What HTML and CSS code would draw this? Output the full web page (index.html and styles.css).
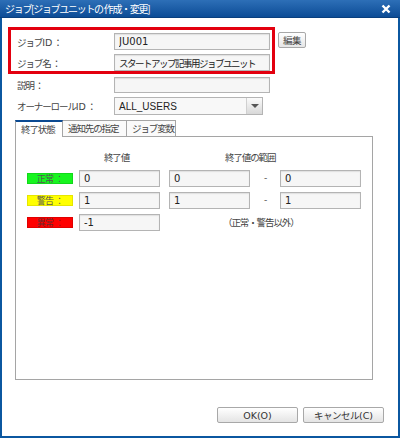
FILE: index.html
```html
<!DOCTYPE html>
<html lang="ja">

<head>
  <meta charset="UTF-8">
  <title>ジョブ[ジョブユニットの作成・変更]</title>
  <link rel="stylesheet" href="styles.css">
</head>

<body>
  <div class="dialog">
    <!-- Title bar -->
    <div class="titlebar">
      <span class="title">ジョブ[ジョブユニットの 作成・変更]</span>
      <svg class="close" width="10" height="10" viewBox="0 0 10 10">
        <path d="M1.5 1.5 L8.5 8.5 M8.5 1.5 L1.5 8.5" stroke="#fff" stroke-width="2.4" />
      </svg>
    </div>

    <div class="body">
      <!-- Job ID / name -->
      <div class="top-row">
        <div class="highlight">
          <div class="form-row">
            <label>ジョブ<span class="latin">ID</span> ：</label>
            <input class="field" type="text" value="JU001">
          </div>
          <div class="form-row">
            <label>ジョブ名 ：</label>
            <input class="field jp" type="text" value="スタートアップ記事用ジョブユニット">
          </div>
        </div>
        <button class="edit">編集</button>
      </div>

      <div class="plain-rows">
        <div class="form-row">
          <label>説明 ：</label>
          <input class="field" type="text" value="">
        </div>
        <div class="form-row select-row">
          <label>オーナーロール<span class="latin">ID</span> ：</label>
          <div class="select">
            <span>ALL_USERS</span>
            <span class="arrow"></span>
          </div>
        </div>
      </div>

      <!-- Tabs -->
      <div class="tabs">
        <div class="tab active">終了状態</div>
        <div class="tab">通知先の指定</div>
        <div class="tab">ジョブ変数</div>
      </div>
      <div class="panel">
        <div class="end-grid">
          <div></div>
          <div class="head head-value">終了値</div>
          <div class="head head-range">終了値の範囲</div>

          <div class="status ok">正常 ：</div>
          <input class="field small" type="text" value="0">
          <input class="field small" type="text" value="0">
          <div class="dash">-</div>
          <input class="field small" type="text" value="0">

          <div class="status warn">警告 ：</div>
          <input class="field small" type="text" value="1">
          <input class="field small" type="text" value="1">
          <div class="dash">-</div>
          <input class="field small" type="text" value="1">

          <div class="status error">異常 ：</div>
          <input class="field small" type="text" value="-1">
          <div class="note">（正常・警告以外）</div>
        </div>
      </div>

      <!-- Footer -->
      <div class="footer">
        <button class="btn"><span class="latin">OK(O)</span></button>
        <button class="btn">キャンセル<span class="latin">(C)</span></button>
      </div>
    </div>
  </div>
</body>

</html>
```

FILE: styles.css
```css
* {
  margin: 0;
  padding: 0;
  box-sizing: border-box;
}

html, body {
  width: 400px;
  height: 438px;
  overflow: hidden;
  font-family: "Noto Sans CJK JP", sans-serif;
  font-size: 9.5px;
  letter-spacing: -1.1px;
  color: #444;
  background: #fff;
  white-space: nowrap;
}

.latin {
  font-family: "DejaVu Sans", sans-serif;
  font-size: 9.5px;
  letter-spacing: 0;
}

.dialog {
  width: 400px;
  height: 438px;
  display: flex;
  flex-direction: column;
  border: 2px solid #0b57a0;
  border-top: none;
}

/* Title bar */
.titlebar {
  height: 18px;
  margin: 0 -2px;
  padding: 0 9px 0 5px;
  display: flex;
  align-items: center;
  justify-content: space-between;
  background: linear-gradient(#2d6fb7, #0c4c96);
  border-bottom: 1px solid #093f7e;
}

.title {
  color: #fff;
  font-size: 10px;
  letter-spacing: -1.3px;
}

.close {
  display: block;
}

.body {
  flex: 1;
  display: flex;
  flex-direction: column;
  padding: 9px 0 0 6px;
}

.top-row {
  display: flex;
  align-items: flex-start;
}

.highlight {
  width: 267px;
  border: 3px solid #e3000f;
  padding: 3px 2px 0 6px;
  display: flex;
  flex-direction: column;
  gap: 4px;
}

.form-row {
  display: flex;
  align-items: center;
  height: 17px;
}

.form-row label {
  width: 97px;
}

.field {
  width: 156px;
  height: 17px;
  border: 1px solid #b4b4b4;
  background: #f6f6f6;
  box-shadow: inset 0 1px 1px #e0e0e0;
  padding: 0 4px;
  font-family: "DejaVu Sans", sans-serif;
  font-size: 10px;
  letter-spacing: 0;
  color: #222;
  outline: none;
}

.field.jp {
  font-family: "Noto Sans CJK JP", sans-serif;
  font-size: 9.5px;
  letter-spacing: -1.5px;
}

.edit {
  margin: 5px 0 0 3px;
  width: 28px;
  height: 16px;
  border: 1px solid #a8a8a8;
  border-radius: 2px;
  background: linear-gradient(#ffffff, #e6e6e6);
  font-family: "Noto Sans CJK JP", sans-serif;
  font-size: 9.5px;
  letter-spacing: -0.5px;
  color: #444;
}

.plain-rows {
  padding-left: 9px;
  margin-top: 3px;
  display: flex;
  flex-direction: column;
  gap: 4px;
}

.plain-rows .form-row:first-child {
  height: 16px;
}

.plain-rows .form-row:first-child .field {
  height: 16px;
}

.select-row {
  height: 18px !important;
}

.select {
  width: 149px;
  height: 18px;
  border: 1px solid #b4b4b4;
  background: #f8f8f8;
  display: flex;
  align-items: center;
  justify-content: space-between;
  padding-left: 4px;
  font-family: "Liberation Sans", sans-serif;
  font-size: 10px;
  letter-spacing: 0;
  color: #222;
}

.arrow {
  width: 16px;
  height: 16px;
  border-left: 1px solid #d0d0d0;
  background: linear-gradient(#fbfbfb, #d8d8d8);
  position: relative;
}

.arrow::after {
  content: "";
  position: absolute;
  left: 4px;
  top: 6px;
  border-left: 4px solid transparent;
  border-right: 4px solid transparent;
  border-top: 4px solid #555;
}

/* Tabs */
.tabs {
  display: flex;
  margin: 5px 0 0 7px;
  height: 16px;
}

.tab {
  padding: 0 5px;
  height: 16px;
  border: 1px solid #a5a5a5;
  border-bottom: none;
  border-left: none;
  background: #fafafa;
  line-height: 15px;
}

.tab.active {
  width: 48px;
  border-left: 1px solid #a5a5a5;
  border-top: 2px solid #0b4a92;
  background: #fff;
  line-height: 14px;
  margin-bottom: -1px;
  height: 17px;
  position: relative;
}

.tab:nth-child(2) {
  width: 64px;
}

.tab:nth-child(3) {
  width: 49px;
}

.panel {
  margin-left: 7px;
  width: 358px;
  height: 244px;
  border: 1px solid #a5a5a5;
  padding: 11px 0 0 11px;
}

.end-grid {
  display: grid;
  grid-template-columns: 52px 90px 81px 30px 82px;
  grid-auto-rows: 17px;
  row-gap: 5px;
  align-items: center;
}

.head-value {
  width: 81px;
  text-align: center;
  padding-right: 6px;
}

.head-range {
  grid-column: span 3;
  padding-left: 56px;
}

.status {
  width: 46px;
  height: 11px;
  font-size: 9px;
  line-height: 10px;
  text-align: center;
  letter-spacing: -0.6px;
  color: #555;
}

.ok {
  background: #17f51f;
  border: 1px solid #12d81a;
}

.warn {
  background: #ffff00;
  border: 1px solid #e6e600;
}

.error {
  background: #ff0000;
  border: 1px solid #e00000;
  color: #6a2a2a;
}

.field.small {
  width: 81px;
}

.dash {
  text-align: center;
  margin-top: -4px;
}

.note {
  grid-column: span 3;
  padding-left: 54px;
  margin-top: -2px;
}

/* Footer */
.footer {
  margin-top: auto;
  display: flex;
  justify-content: flex-end;
  gap: 5px;
  padding: 0 14px 13px 0;
}

.btn {
  width: 81px;
  height: 16px;
  border: 1px solid #a8a8a8;
  border-radius: 2px;
  background: linear-gradient(#ffffff, #e4e4e4);
  font-family: "Noto Sans CJK JP", sans-serif;
  font-size: 9.5px;
  letter-spacing: -0.5px;
  color: #333;
}
```
